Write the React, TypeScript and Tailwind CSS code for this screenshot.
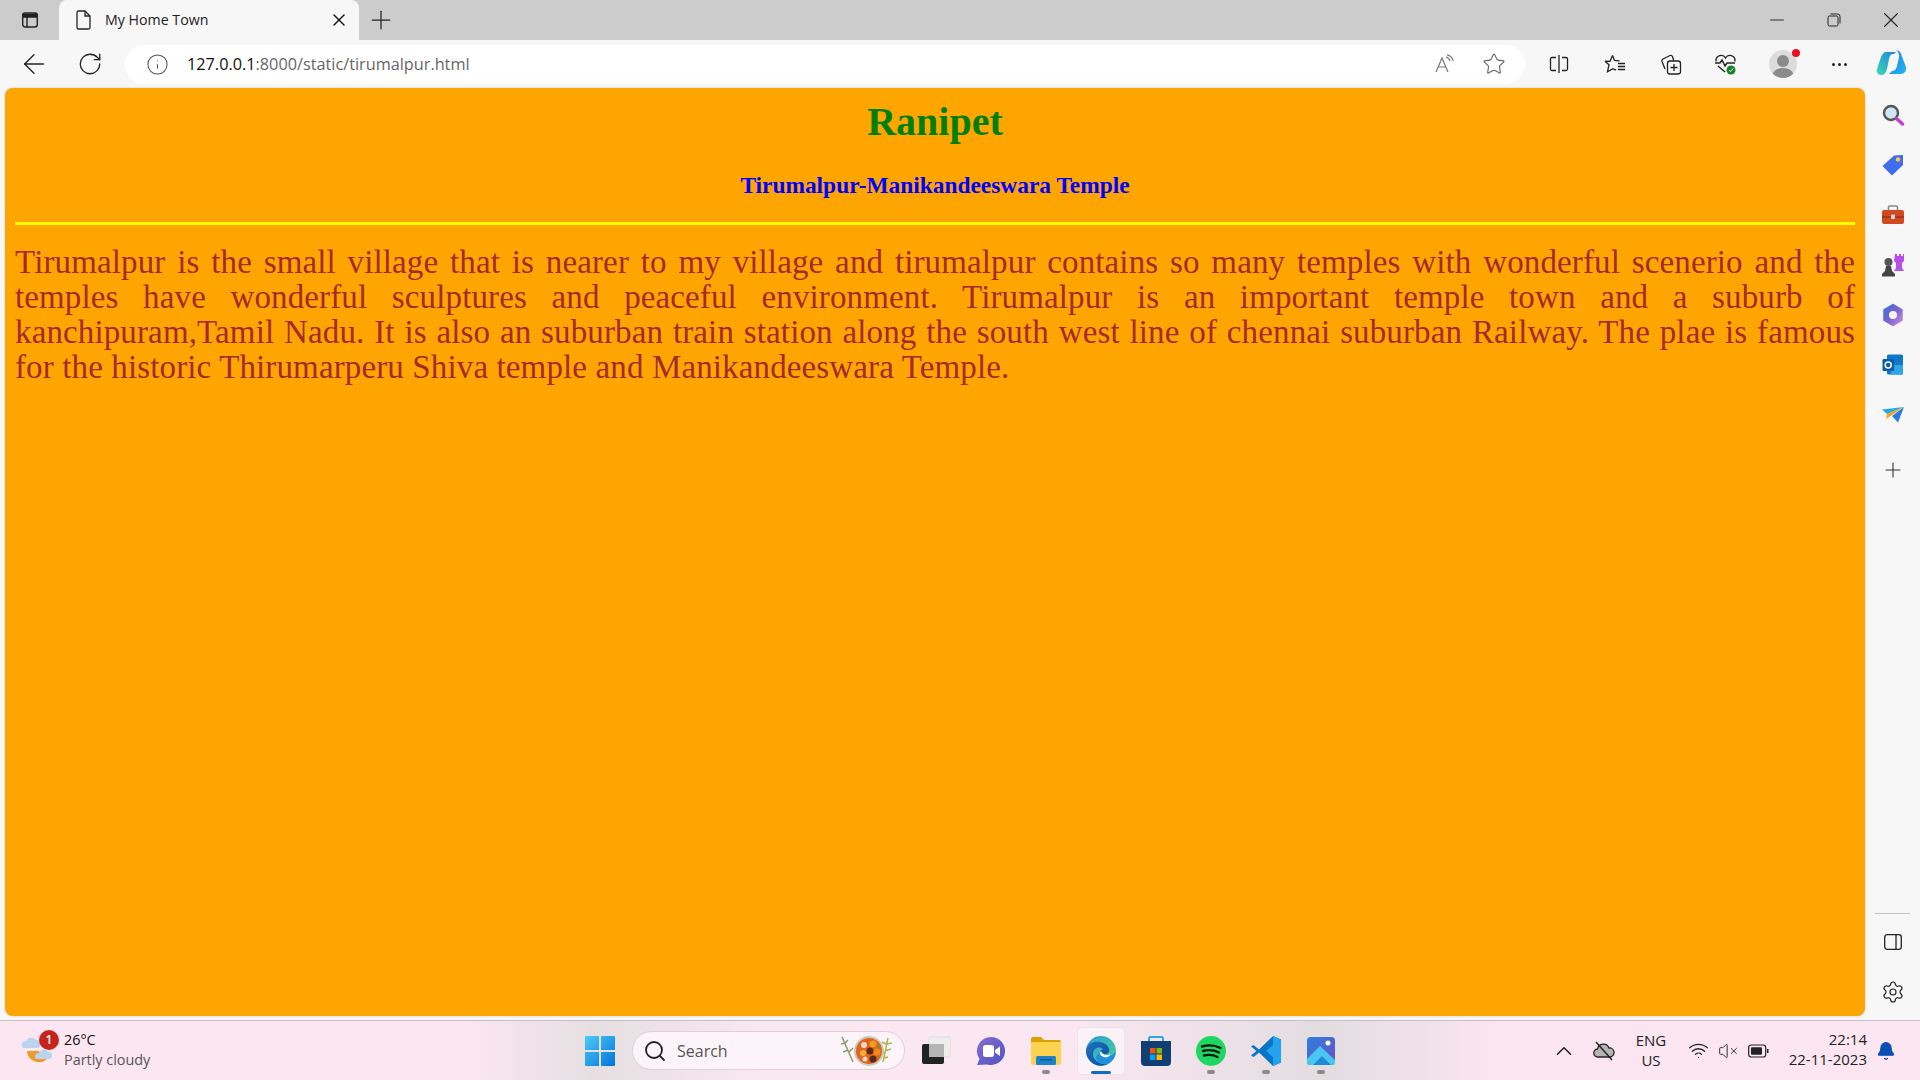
import React from 'react';
import { ArrowLeft, RotateCw, Info, Star, Plus, X, Minus, Settings, Search, ChevronUp, Bell, VolumeX, Wifi } from 'lucide-react';

const ui = { fontFamily: '"Open Sans", "Noto Sans", sans-serif' };
const serif = { fontFamily: '"Liberation Serif", serif' };

const Box = ({ w, className = '', children }: { w: string; className?: string; children?: React.ReactNode }) => (
  <div className={`flex shrink-0 items-center justify-center ${w} ${className}`}>{children}</div>
);

const TabIcon = () => (
  <svg width="18" height="18" viewBox="0 0 18 18" fill="none" stroke="#222" strokeWidth="1.4">
    <rect x="1.7" y="2" width="14.6" height="14" rx="2.5" />
    <path d="M2 3.5h14v2.5H2z" fill="#222" />
    <path d="M6 6v10" />
  </svg>
);

const PageIcon = () => (
  <svg width="18" height="20" viewBox="0 0 18 20" fill="none" stroke="#222" strokeWidth="1.3">
    <path d="M3.5 1h6.5l5 5v11.5a1.5 1.5 0 0 1-1.5 1.5h-10A1.5 1.5 0 0 1 2 17.5v-15A1.5 1.5 0 0 1 3.5 1z" />
    <path d="M10 1v5h5" />
  </svg>
);

const Restore = () => (
  <svg width="14" height="14" viewBox="0 0 14 14" fill="none" stroke="#222" strokeWidth="1">
    <rect x="1" y="3" width="10" height="10" rx="1.5" />
    <path d="M3.5 1h7a2.5 2.5 0 0 1 2.5 2.5v7" />
  </svg>
);

const ReadAloud = () => (
  <svg width="22" height="20" viewBox="0 0 22 20" fill="none" stroke="#777" strokeWidth="1.2">
    <path d="M2 18 8 4l6 14M4.2 13h7.6" />
    <path d="M12 3c2 .5 3.5 2 4 4M13 0.8c3 .6 5.5 3 6.2 6" />
  </svg>
);

const SplitIcon = () => (
  <svg width="20" height="20" viewBox="0 0 20 20" fill="none" stroke="#222" strokeWidth="1.3">
    <path d="M7 3.5H3a1.5 1.5 0 0 0-1.5 1.5v10A1.5 1.5 0 0 0 3 16.5h4M13 3.5h4A1.5 1.5 0 0 1 18.500 5v10a1.500 1.500 0 0 1-1.500 1.500h-4M10 1v18" />
  </svg>
);

const FavIcon = () => (
  <svg width="22" height="20" viewBox="0 0 22 20" fill="none" stroke="#222" strokeWidth="1.3">
    <path d="M8.500 1.500 10.500 6.500l5 .4M1 7.200l5 .1L8.500 1.500M1 7.200l4 3.500-1.500 7 5.500-3 3 1.500" />
    <path d="M14 9.500h7M14 12.500h7M14 15.500h7" />
  </svg>
);

const Collections = () => (
  <svg width="22" height="22" viewBox="0 0 22 22" fill="none" stroke="#222" strokeWidth="1.3">
    <rect x="7.500" y="8" width="13" height="13" rx="2.500" />
    <path d="M14 11v7M10.500 14.500h7" />
    <path d="M5 16 2 8.500a2 2 0 0 1 1-2.500L10 2.500a2 2 0 0 1 2.500 1l1.200 4" />
  </svg>
);

const Health = () => (
  <svg width="24" height="24" viewBox="0 0 24 24" fill="none">
    <path d="M2 9.500C1.500 3 9 1.500 11.500 6 14 1.500 21.500 3 21 9.500M4 14l7 6" stroke="#222" strokeWidth="1.400" />
    <path d="M1 11h5l2-3 3 6 2-3h8" stroke="#222" strokeWidth="1.400" />
    <circle cx="17" cy="18" r="4.500" fill="#17842c" />
    <path d="m15 18 1.500 1.500 2.500-3" stroke="#fff" strokeWidth="1" />
  </svg>
);

const Profile = () => (
  <div className="relative h-[28px] w-[28px] overflow-hidden rounded-full bg-[#dcdcdc]">
    <svg width="28" height="28" viewBox="0 0 28 28">
      <circle cx="14" cy="11" r="6" fill="#8a8a8a" />
      <path d="M3 28c0-7 5-10 11-10s11 3 11 10z" fill="#8a8a8a" />
    </svg>
  </div>
);

const Copilot = () => (
  <svg width="32" height="30" viewBox="0 0 32 30">
    <defs>
      <linearGradient id="cpa" x1="0" y1="1" x2="1" y2="0">
        <stop offset="0" stopColor="#3fd8b0" />
        <stop offset="1" stopColor="#1b83e0" />
      </linearGradient>
      <linearGradient id="cpb" x1="0" y1="0" x2="1" y2="1">
        <stop offset="0" stopColor="#1c7fe6" />
        <stop offset="1" stopColor="#24b6ee" />
      </linearGradient>
    </defs>
    <path d="M10 3h10l-2 2c-3 0-4 1-5 5l-2 10c-1 4-3 6-6 6-3 0-5-3-4-6l4-12c1-3 3-5 5-5z" fill="url(#cpa)" />
    <path d="M20 1c2 0 4 1 5 4l5 13c1 4-2 7-5 7H13l3-3c3 0 4-2 5-5l2-9c.5-3-1-6-3-7z" fill="url(#cpb)" />
  </svg>
);

const SideMagnifier = () => (
  <svg width="24" height="24" viewBox="0 0 24 24">
    <circle cx="10" cy="10" r="7" fill="#cfe6f6" stroke="#555" strokeWidth="2.400" />
    <path d="m15.500 15.500 6 5.500" stroke="#c23fd0" strokeWidth="3.400" strokeLinecap="round" />
  </svg>
);

const SideTag = () => (
  <svg width="24" height="24" viewBox="0 0 24 24">
    <path d="M1.500 13 13 2.500l9-.5v10L11 22.500z" fill="#3f6cf0" strokeLinejoin="round" />
    <circle cx="17" cy="6.500" r="2.200" fill="#f4cf3b" />
  </svg>
);

const SideBriefcase = () => (
  <svg width="24" height="22" viewBox="0 0 24 22">
    <path d="M7.500 6V3.500a1.500 1.500 0 0 1 1.500-1.500h6a1.500 1.500 0 0 1 1.500 1.500V6" fill="none" stroke="#888" strokeWidth="1.600" />
    <rect x="1" y="6" width="22" height="14" rx="2" fill="#cf4a21" />
    <rect x="1" y="12" width="22" height="2" fill="#a9361a" />
    <rect x="10" y="10.500" width="4" height="4.500" rx="1" fill="#d7d7d7" />
  </svg>
);

const SideChess = () => (
  <svg width="24" height="26" viewBox="0 0 24 26">
    <path d="M14 2h2v2h2V2h2v2h2V2h1v7l-2 2v5l2 3H13l2-3v-5l-2-2z" fill="#b84fe8" />
    <circle cx="7.500" cy="10" r="4" fill="#555" />
    <path d="M5 14h5l1 5 3 3v2.500H1V22l3-3z" fill="#444" />
  </svg>
);

const SideM365 = () => (
  <svg width="22" height="24" viewBox="0 0 22 24">
    <defs>
      <linearGradient id="m365" x1="0" y1="0" x2="1" y2="1">
        <stop offset="0" stopColor="#3b70d8" />
        <stop offset="0.5" stopColor="#7a63d0" />
        <stop offset="1" stopColor="#c58fdc" />
      </linearGradient>
    </defs>
    <path d="M11 2 19.500 7v10L11 22l-8.500-5V7z" fill="url(#m365)" stroke="url(#m365)" strokeWidth="2.500" strokeLinejoin="round" />
    <circle cx="11" cy="12" r="4" fill="#f7f7f7" />
  </svg>
);

const SideOutlook = () => (
  <svg width="22" height="22" viewBox="0 0 22 22">
    <rect x="5" y="0.500" width="16" height="20" rx="1.500" fill="#0f78c8" />
    <path d="M9 11h12v9.500H9z" fill="#2ea7e6" />
    <rect x="0.500" y="5" width="11.500" height="12" rx="1.200" fill="#0a5da8" />
    <circle cx="6.200" cy="11" r="3" fill="none" stroke="#fff" strokeWidth="1.500" />
  </svg>
);

const SideSend = () => (
  <svg width="24" height="18" viewBox="0 0 24 18">
    <path d="M1 3.500 23 1 6 8z" fill="#27a8e6" />
    <path d="M23 1 6 8l-1 5z" fill="#f1a51f" />
    <path d="M23 1 11 10l6 6.500z" fill="#2c7be5" />
  </svg>
);

const PanelIcon = () => (
  <svg width="20" height="18" viewBox="0 0 20 18" fill="none" stroke="#222" strokeWidth="1.300">
    <rect x="1.700" y="1.700" width="16.600" height="14.600" rx="2.500" />
    <path d="M13 2v14" />
  </svg>
);

const WeatherIcon = () => (
  <div className="relative h-[40px] w-[40px]">
    <svg width="40" height="40" viewBox="0 0 40 40">
      <path d="M7 20a12 12 0 0 0 21 7 11 11 0 0 1-9-7z" fill="#f09a28" />
      <path d="M3 17a4 4 0 0 1 3-7 6 6 0 0 1 10-1 4 4 0 0 1 1 8z" fill="#b9d4ef" />
      <path d="M16 28a3.500 3.500 0 0 1 3-6 5 5 0 0 1 9-1 3.500 3.500 0 0 1 1 7z" fill="#b9d4ef" />
    </svg>
    <span className="absolute left-[19px] top-[-1px] flex h-[20px] w-[20px] items-center justify-center rounded-full bg-[#c4241c] text-[12px] font-semibold leading-none text-white">1</span>
  </div>
);

const WinLogo = () => (
  <svg width="30" height="30" viewBox="0 0 30 30">
    <defs>
      <linearGradient id="win" x1="0" y1="0" x2="1" y2="1">
        <stop offset="0" stopColor="#4fcbf9" />
        <stop offset="1" stopColor="#0073d6" />
      </linearGradient>
    </defs>
    <path d="M0 1a1 1 0 0 1 1-1h13v14H0zM16 0h13a1 1 0 0 1 1 1v13H16zM0 16h14v14H1a1 1 0 0 1-1-1zM16 16h14v13a1 1 0 0 1-1 1H16z" fill="url(#win)" />
  </svg>
);

const Dish = () => (
  <svg width="60" height="34" viewBox="0 0 60 34">
    <path d="M3 3 14 28M6 9l-4 1M6 9l3-3M9 16l-5 2M10 18l4-4" stroke="#8a9a6a" strokeWidth="1.500" fill="none" />
    <path d="M49 4 44 28M48 10l5-1M47 10l-4-2M46 17l6-2M45 19l-4-2M45 24l4-1" stroke="#a6b84a" strokeWidth="1.500" fill="none" />
    <circle cx="30" cy="17" r="15" fill="#c9c9c0" />
    <circle cx="30" cy="17" r="13" fill="#e0641c" />
    <circle cx="25" cy="11" r="3" fill="#e8d9c8" />
    <circle cx="34" cy="10" r="3.500" fill="#f39a1f" />
    <circle cx="31" cy="17" r="3.500" fill="#5a2a1e" />
    <circle cx="38" cy="18" r="3.500" fill="#f08a1c" />
    <circle cx="24" cy="19" r="3" fill="#f2b23a" />
    <circle cx="34" cy="25" r="3.500" fill="#5a2a1e" />
    <circle cx="26" cy="25" r="2.500" fill="#e8d9c8" />
    <circle cx="40" cy="12" r="1.500" fill="#5e9e30" />
  </svg>
);

const TaskView = () => (
  <svg width="30" height="30" viewBox="0 0 30 30">
    <rect x="8" y="1" width="22" height="20" rx="2" fill="#ededed" stroke="#dddddd" />
    <rect x="1" y="8" width="22" height="20" rx="2" fill="#222" />
    <rect x="8" y="8" width="15" height="13" fill="#b5b5b5" />
  </svg>
);

const ChatIcon = () => (
  <svg width="30" height="30" viewBox="0 0 30 30">
    <defs>
      <linearGradient id="chat" x1="0" y1="0" x2="1" y2="1">
        <stop offset="0" stopColor="#8a6bd1" />
        <stop offset="1" stopColor="#4c55c4" />
      </linearGradient>
    </defs>
    <path d="M15 1a14 14 0 1 1-4 27.400L1 29l2.500-6A14 14 0 0 1 15 1z" fill="url(#chat)" />
    <rect x="7" y="9" width="11" height="12" rx="2.500" fill="#fff" />
    <path d="m19 14 5-3.500v9.500l-5-3.500z" fill="#fff" />
  </svg>
);

const FolderIcon = () => (
  <svg width="30" height="28" viewBox="0 0 30 28">
    <path d="M0 2a2 2 0 0 1 2-2h8l3 3h15a2 2 0 0 1 2 2v3H0z" fill="#dca000" />
    <path d="M0 5h30v21a2 2 0 0 1-2 2H2a2 2 0 0 1-2-2z" fill="#fcd24f" />
    <rect x="5" y="19" width="20" height="9" rx="1.500" fill="#1f7fc9" />
    <rect x="9" y="22" width="12" height="1.500" fill="#0e5a99" />
  </svg>
);

const EdgeIcon = () => (
  <svg width="30" height="30" viewBox="0 0 30 30">
    <defs>
      <linearGradient id="edgea" x1="0" y1="0" x2="1" y2="1">
        <stop offset="0" stopColor="#2f9ad8" />
        <stop offset="1" stopColor="#46d49a" />
      </linearGradient>
      <linearGradient id="edgeb" x1="0" y1="0" x2="1" y2="1">
        <stop offset="0" stopColor="#1e6fc0" />
        <stop offset="1" stopColor="#0b4f9e" />
      </linearGradient>
    </defs>
    <circle cx="15" cy="15" r="15" fill="url(#edgea)" />
    <path d="M0 15C1 7 8 5 14 6c7 1 10 6 9 10-2 3-7 3-9 1 0-3 2-4 3-4-4-3-10-1-10 5 0 6 6 11 15 10a15 15 0 0 1-22-13z" fill="url(#edgeb)" />
    <path d="M14 17c1 3 5 4 9 3 3-1 5-2 7-4-1 6-5 11-9 12-5 1-10-2-11-6 0-2 2-5 4-5z" fill="#1f8fe0" />
    <path d="M15 15c1 4 6 5 10 3l-3 3c-4 1-8-1-8-4z" fill="#fff" />
  </svg>
);

const StoreIcon = () => (
  <svg width="30" height="30" viewBox="0 0 30 30">
    <path d="M8 6V2.500A1.500 1.500 0 0 1 9.500 1h11A1.500 1.500 0 0 1 22 2.500V6" fill="none" stroke="#2aa8e0" strokeWidth="2" />
    <path d="M0 5h30v21a4 4 0 0 1-4 4H4a4 4 0 0 1-4-4z" fill="#123f72" />
    <rect x="9" y="12" width="5.500" height="5.500" fill="#f25022" />
    <rect x="15.500" y="12" width="5.500" height="5.500" fill="#7fba00" />
    <rect x="9" y="18.500" width="5.500" height="5.500" fill="#00a4ef" />
    <rect x="15.500" y="18.500" width="5.500" height="5.500" fill="#ffb900" />
  </svg>
);

const SpotifyIcon = () => (
  <svg width="30" height="30" viewBox="0 0 30 30">
    <circle cx="15" cy="15" r="15" fill="#1ed760" />
    <path d="M6 10.500c6-1.700 13-1.300 18.500 1.500M7 15c5-1.300 11-1 16 1.500M8 19.500c4.500-1 9.500-.8 13.500 1.500" stroke="#191414" strokeWidth="2.400" strokeLinecap="round" fill="none" />
  </svg>
);

const VsCodeIcon = () => (
  <svg width="30" height="30" viewBox="0 0 30 30">
    <path d="M22 0 30 3.500v23L22 30 8 16.500 2.500 21 0 19.500 5.500 15 0 10.500 2.500 9l5.500 4.500z" fill="#0a74c6" />
    <path d="M22 0 30 3.500v23L22 30V21l-7-6 7-6z" fill="#22a2ef" />
  </svg>
);

const PhotosIcon = () => (
  <svg width="28" height="28" viewBox="0 0 28 28">
    <defs>
      <linearGradient id="pho" x1="0" y1="0" x2="1" y2="1">
        <stop offset="0" stopColor="#2f80dd" />
        <stop offset="1" stopColor="#6a4ec8" />
      </linearGradient>
    </defs>
    <rect width="28" height="28" rx="3.500" fill="url(#pho)" />
    <circle cx="21" cy="6" r="2.500" fill="#fff" />
    <path d="M0 22 13 9l15 14v2a3 3 0 0 1-3 3H3a3 3 0 0 1-3-3z" fill="#4ac7ef" />
    <path d="M6 28 15 19l9 9z" fill="#1d8ad8" />
  </svg>
);

const CloudOff = () => (
  <svg width="22" height="20" viewBox="0 0 22 20" fill="none">
    <path d="M5 16a4 4 0 0 1-.500-8 6 6 0 0 1 11.500-1 4.500 4.500 0 0 1 1 9z" fill="#b5b5b5" stroke="#222" strokeWidth="1.300" />
    <path d="m3 1 16 18" stroke="#222" strokeWidth="1.500" />
  </svg>
);

const Battery = () => (
  <svg width="21" height="14" viewBox="0 0 21 14" fill="none">
    <rect x="0.700" y="1" width="17" height="12" rx="2.500" stroke="#222" strokeWidth="1.200" />
    <rect x="3" y="3.300" width="11" height="7.400" rx="1" fill="#222" />
    <path d="M19 5v4h1.500V5z" fill="#222" />
  </svg>
);

const Dot = () => <span className="absolute bottom-[-8px] left-1/2 h-[4px] w-[8px] -translate-x-1/2 rounded-full bg-[#8a8a8a]" />;

const TaskButton = ({ children, dot }: { children: React.ReactNode; dot?: boolean }) => (
  <div className="relative flex h-[30px] w-[55px] shrink-0 items-center justify-center">
    {children}
    {dot && <Dot />}
  </div>
);

export default function App() {
  return (
    <div className="flex h-[1080px] w-[1920px] flex-col overflow-hidden bg-[#f7f7f7]" style={ui}>
      {/* tab strip */}
      <div className="flex h-[40px] shrink-0 items-end bg-[#cccccc]">
        <Box w="w-[59px]" className="h-[40px]"><TabIcon /></Box>
        <div className="flex h-[40px] w-[300px] items-center rounded-t-[8px] bg-[#f7f7f7] pl-[16px]">
          <PageIcon />
          <span className="ml-[12px] text-[14.2px] leading-none text-[#222]">My Home Town</span>
          <X className="ml-auto mr-[10px] h-[20px] w-[20px] text-[#111]" strokeWidth={1.7} />
        </div>
        <Box w="w-[44px]" className="h-[40px]"><Plus className="h-[30px] w-[30px] text-[#222]" strokeWidth={1} /></Box>
        <div className="flex-1" />
        <Box w="w-[57px]" className="h-[40px]"><Minus className="h-[22px] w-[22px] text-[#222]" strokeWidth={1} /></Box>
        <Box w="w-[57px]" className="h-[40px]"><Restore /></Box>
        <Box w="w-[58px]" className="h-[40px]"><X className="h-[26px] w-[26px] text-[#222]" strokeWidth={1} /></Box>
      </div>

      {/* toolbar */}
      <div className="flex h-[48px] shrink-0 items-center pl-[12px]">
        <Box w="w-[44px]"><ArrowLeft className="h-[32px] w-[32px] text-[#222]" strokeWidth={1} /></Box>
        <Box w="w-[56px]" className="ml-[6px]"><RotateCw className="h-[26px] w-[26px] text-[#222]" strokeWidth={1.2} /></Box>
        <div className="ml-[7px] flex h-[39px] w-[1400px] shrink-0 items-center rounded-full bg-white pl-[21px]">
          <Info className="h-[23px] w-[23px] text-[#555]" strokeWidth={1.1} />
          <span className="ml-[18px] text-[16.25px] leading-none text-[#666]"><span className="text-[#111]">127.0.0.1</span>:8000/static/tirumalpur.html</span>
          <div className="ml-auto flex items-center">
            <Box w="w-[40px]"><ReadAloud /></Box>
            <Box w="w-[40px]" className="ml-[9px] mr-[11px]"><Star className="h-[24px] w-[24px] text-[#666]" strokeWidth={1.1} /></Box>
          </div>
        </div>
        <Box w="w-[56px]" className="ml-[6px]"><SplitIcon /></Box>
        <Box w="w-[56px]"><FavIcon /></Box>
        <Box w="w-[55px]"><Collections /></Box>
        <Box w="w-[55px]"><Health /></Box>
        <div className="relative ml-[16px] mr-[14px]">
          <Profile />
          <span className="absolute right-[-3px] top-[-1px] h-[8px] w-[8px] rounded-full bg-[#e81123]" />
        </div>
        <Box w="w-[56px]">
          <div className="flex gap-[3px]">
            <span className="h-[3px] w-[3px] rounded-full bg-[#222]" />
            <span className="h-[3px] w-[3px] rounded-full bg-[#222]" />
            <span className="h-[3px] w-[3px] rounded-full bg-[#222]" />
          </div>
        </Box>
        <Box w="w-[50px]"><Copilot /></Box>
      </div>

      {/* page + edge sidebar */}
      <div className="flex min-h-0 flex-1 pb-[4px]">
        <main className="ml-[5px] w-[1860px] shrink-0 rounded-[8px] bg-[#ffa500] px-[10px] pt-[1px] shadow-[0_0_2px_rgba(0,0,0,0.25)]">
          <h1 className="mt-[10px] text-center text-[40px] font-bold leading-[46px] text-[#008000]" style={serif}>Ranipet</h1>
          <h2 className="mt-[26px] text-center text-[23.4px] font-bold leading-[28px] text-[#0000ff]" style={serif}>Tirumalpur-Manikandeeswara Temple</h2>
          <hr className="mt-[23px] h-[3px] border-0 bg-[#ffff00]" />
          <p className="mt-[20px] text-justify text-[33px] leading-[35px] tracking-[0.13px] text-[#a52a2a]" style={serif}>
            Tirumalpur is the small village that is nearer to my village and tirumalpur contains so many temples with wonderful scenerio and the temples have wonderful sculptures and peaceful environment. Tirumalpur is an important temple town and a suburb of kanchipuram,Tamil Nadu. It is also an suburban train station along the south west line of chennai suburban Railway. The plae is famous for the historic Thirumarperu Shiva temple and Manikandeeswara Temple.
          </p>
        </main>
        <aside className="flex flex-1 flex-col items-center pt-[5px]">
          <Box w="w-full" className="h-[44px]"><SideMagnifier /></Box>
          <Box w="w-full" className="mt-[6px] h-[44px]"><SideTag /></Box>
          <Box w="w-full" className="mt-[6px] h-[44px]"><SideBriefcase /></Box>
          <Box w="w-full" className="mt-[6px] h-[44px]"><SideChess /></Box>
          <Box w="w-full" className="mt-[6px] h-[44px]"><SideM365 /></Box>
          <Box w="w-full" className="mt-[6px] h-[44px]"><SideOutlook /></Box>
          <Box w="w-full" className="mt-[6px] h-[44px]"><SideSend /></Box>
          <Box w="w-full" className="mt-[11px] h-[44px]"><Plus className="h-[24px] w-[24px] text-[#333]" strokeWidth={1.1} /></Box>
          <div className="mt-auto h-[1px] w-[35px] bg-[#c4c4c4]" />
          <Box w="w-full" className="mt-[6px] h-[44px]"><PanelIcon /></Box>
          <Box w="w-full" className="mb-[2px] mt-[6px] h-[44px]"><Settings className="h-[24px] w-[24px] text-[#222]" strokeWidth={1.2} /></Box>
        </aside>
      </div>

      {/* taskbar */}
      <footer className="flex h-[60px] shrink-0 items-center border-t border-[#c9bfc5] bg-[linear-gradient(90deg,#fce6f1_0%,#fbe6f0_24%,#e6dfe2_31%,#fae8f1_40%,#fbe7f1_55%,#e3dde0_69%,#fbe5f0_78%,#fce6f2_100%)] pl-[20px] pr-[15px]">
        <WeatherIcon />
        <div className="mb-[2px] ml-[4px] flex w-[160px] flex-col text-[14.4px] leading-[20px]">
          <span className="text-[#111]">26°C</span>
          <span className="text-[#555]">Partly cloudy</span>
        </div>
        <Box w="w-[34px]" className="ml-[359px]"><WinLogo /></Box>
        <div className="ml-[15px] flex h-[39px] w-[273px] shrink-0 items-center rounded-full border border-[#e3cdd9] bg-[#fdf4f9] pl-[10px]">
          <Search className="h-[24px] w-[24px] text-[#222]" strokeWidth={1.8} />
          <span className="ml-[10px] text-[16px] leading-none text-[#555]">Search</span>
          <div className="ml-auto mr-[5px]"><Dish /></div>
        </div>
        <div className="ml-[3px] flex items-center">
          <TaskButton><TaskView /></TaskButton>
          <TaskButton><ChatIcon /></TaskButton>
          <TaskButton dot><FolderIcon /></TaskButton>
          <div className="relative flex h-[48px] w-[55px] shrink-0 items-center justify-center">
            <div className="absolute inset-y-0 left-[4px] right-[3px] rounded-[4px] border border-[#f0e2ea] bg-[#fbf2f7]" />
            <div className="relative"><EdgeIcon /></div>
            <span className="absolute bottom-[1px] left-1/2 h-[3px] w-[20px] -translate-x-1/2 rounded-full bg-[#0a6cc4]" />
          </div>
          <TaskButton><StoreIcon /></TaskButton>
          <TaskButton dot><SpotifyIcon /></TaskButton>
          <TaskButton dot><VsCodeIcon /></TaskButton>
          <TaskButton dot><PhotosIcon /></TaskButton>
        </div>
        <div className="flex-1" />
        <Box w="w-[40px]"><ChevronUp className="h-[26px] w-[26px] text-[#222]" strokeWidth={1.4} /></Box>
        <Box w="w-[40px]"><CloudOff /></Box>
        <div className="mb-[2px] ml-[2px] w-[50px] text-center text-[15px] leading-[20px] text-[#222]">
          <div>ENG</div>
          <div>US</div>
        </div>
        <Box w="w-[30px]" className="ml-[7px]"><Wifi className="h-[21px] w-[21px] text-[#222]" strokeWidth={1.5} /></Box>
        <Box w="w-[30px]"><VolumeX className="h-[20px] w-[20px] text-[#333]" strokeWidth={1.2} /></Box>
        <Box w="w-[30px]"><Battery /></Box>
        <div className="mb-[3px] ml-[7px] w-[87px] text-right text-[15px] leading-[20px] text-[#222]">
          <div>22:14</div>
          <div>22-11-2023</div>
        </div>
        <Box w="w-[38px]"><Bell className="h-[20px] w-[20px] fill-[#0a4fb5] text-[#0a4fb5]" strokeWidth={1.5} /></Box>
      </footer>
    </div>
  );
}
